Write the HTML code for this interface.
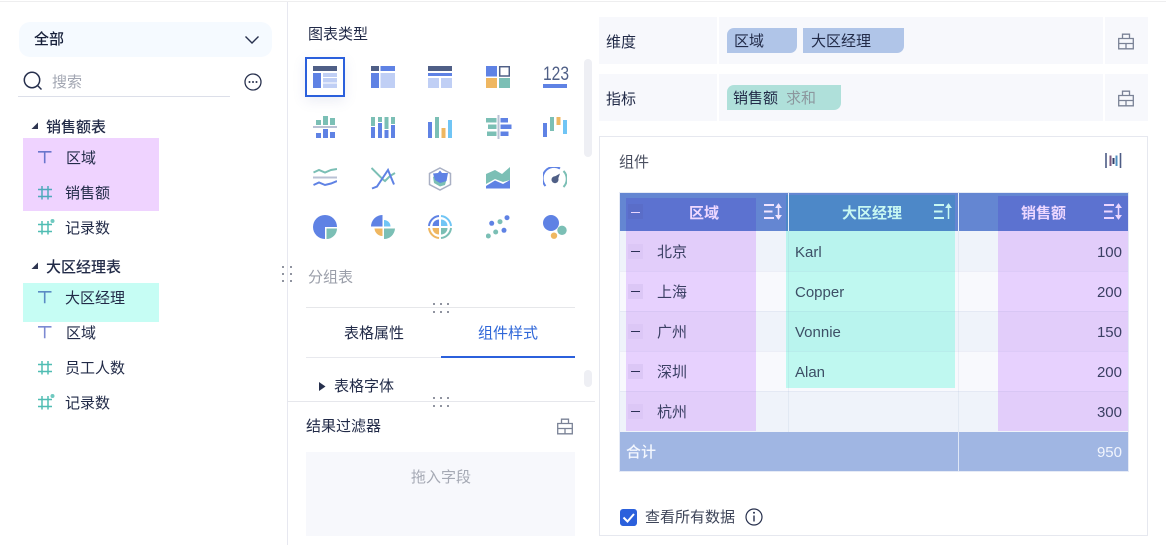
<!DOCTYPE html>
<html lang="zh"><head><meta charset="utf-8"><style>
html,body{margin:0;padding:0;background:#fff}
#p{position:relative;width:1166px;height:545px;overflow:hidden;background:#fff;font-family:"Liberation Sans","Noto Sans CJK SC",sans-serif;font-size:15px;color:#222b48}
#p div,#p svg{position:absolute}
.t{line-height:20px;white-space:nowrap;margin-top:2px}
.b{font-weight:500}
.d{width:2px;height:2px;background:#6d7282;border-radius:50%}
.m{width:15px;height:15px;background:#dcc7f6;left:628px}
.m:after{content:"";position:absolute;left:3px;top:7px;width:9px;height:1px;background:#2c3056}
</style></head><body><div id="p">
<div style="left:0;top:1px;width:1166px;height:1px;background:#eeeeef"></div>
<div style="left:287px;top:2px;width:1px;height:543px;background:#e7e8f0"></div>

<!-- left panel -->
<div style="left:19px;top:22px;width:253px;height:35px;background:#f5faff;border-radius:11px"></div>
<div class="t b" style="left:34px;top:28px;color:#17203a">全部</div>
<svg style="left:244px;top:35px" width="16" height="10"><path d="M1.5 1.5L8 8l6.500-6.500" fill="none" stroke="#27304d" stroke-width="1.400"/></svg>
<svg style="left:22px;top:70px" width="22" height="22"><circle cx="10" cy="10" r="7.700" fill="none" stroke="#27304d" stroke-width="1.500"/><path d="M15.500 15.500L19.500 19.500" stroke="#27304d" stroke-width="1.500"/></svg>
<div class="t" style="left:52px;top:71px;color:#a2a6b2">搜索</div>
<div style="left:18px;top:96px;width:212px;height:1px;background:#dcdfe9"></div>
<svg style="left:244px;top:73px" width="18" height="18"><circle cx="9" cy="9" r="8" fill="none" stroke="#27304d" stroke-width="1.300"/><circle cx="5.500" cy="9" r="1" fill="#27304d"/><circle cx="9" cy="9" r="1" fill="#27304d"/><circle cx="12.500" cy="9" r="1" fill="#27304d"/></svg>

<svg style="left:31px;top:122px" width="8" height="8"><path d="M7 0.500V7H0.500z" fill="#2e3550"/></svg>
<div class="t b" style="left:46px;top:116px">销售额表</div>
<div style="left:23px;top:138px;width:136px;height:73px;background:#efd3ff"></div>
<svg style="left:37px;top:150px" width="16" height="16"><path d="M1 1.800h13.500M7.700 1.800v11.500" fill="none" stroke="#6a76cc" stroke-width="1.600"/></svg>
<div class="t" style="left:66px;top:147px">区域</div>
<svg style="left:37px;top:185px" width="16" height="16"><path d="M1 4.500h14M1 11.500h14M5 1v13.500M11 1v13.500" fill="none" stroke="#4fa9bb" stroke-width="1.500"/></svg>
<div class="t" style="left:65px;top:182px">销售额</div>
<svg style="left:37px;top:218px" width="19" height="18"><path d="M1 6.500h14M1 13.500h14M5 3v13.500M11 3v13.500" fill="none" stroke="#50bdb3" stroke-width="1.500"/><circle cx="15.500" cy="3" r="2" fill="#6fc9c0"/></svg>
<div class="t" style="left:65px;top:217px">记录数</div>

<svg style="left:31px;top:262px" width="8" height="8"><path d="M7 0.500V7H0.500z" fill="#2e3550"/></svg>
<div class="t b" style="left:46px;top:256px">大区经理表</div>
<div style="left:23px;top:283px;width:136px;height:39px;background:#c6fdf4"></div>
<svg style="left:37px;top:290px" width="16" height="16"><path d="M1 1.800h13.500M7.700 1.800v11.500" fill="none" stroke="#5b8bc4" stroke-width="1.600"/></svg>
<div class="t" style="left:65px;top:287px">大区经理</div>
<svg style="left:37px;top:325px" width="16" height="16"><path d="M1 1.800h13.500M7.700 1.800v11.500" fill="none" stroke="#7c8ad2" stroke-width="1.600"/></svg>
<div class="t" style="left:66px;top:322px">区域</div>
<svg style="left:37px;top:360px" width="16" height="16"><path d="M1 4.500h14M1 11.500h14M5 1v13.500M11 1v13.500" fill="none" stroke="#50bdb3" stroke-width="1.500"/></svg>
<div class="t" style="left:65px;top:357px">员工人数</div>
<svg style="left:37px;top:393px" width="19" height="18"><path d="M1 6.500h14M1 13.500h14M5 3v13.500M11 3v13.500" fill="none" stroke="#50bdb3" stroke-width="1.500"/><circle cx="15.500" cy="3" r="2" fill="#6fc9c0"/></svg>
<div class="t" style="left:65px;top:392px">记录数</div>

<div class="d" style="left:282px;top:266px"></div><div class="d" style="left:282px;top:273px"></div><div class="d" style="left:282px;top:280px"></div>
<div class="d" style="left:290px;top:266px"></div><div class="d" style="left:290px;top:273px"></div><div class="d" style="left:290px;top:280px"></div>

<!-- middle panel -->
<div class="t" style="left:308px;top:23px">图表类型</div>
<div style="left:305px;top:57px;width:36px;height:36px;border:2px solid #2b60dc;box-shadow:0 4px 12px rgba(90,110,170,.12);background:#fff"></div>

<svg style="left:313px;top:66px" width="24" height="22"><rect width="24" height="5" fill="#4f5f86"/><rect y="7" width="8" height="15" fill="#5f82e4"/><rect x="10" y="7" width="14" height="4" fill="#c0cff5"/><rect x="10" y="12" width="14" height="4.500" fill="#c0cff5"/><rect x="10" y="17.500" width="14" height="4.500" fill="#c0cff5"/></svg>
<svg style="left:371px;top:66px" width="24" height="22"><rect width="8" height="5" fill="#4f5f86"/><rect x="9.500" width="14.500" height="5" fill="#5f82e4"/><rect y="7" width="8" height="15" fill="#5f82e4"/><rect x="9.500" y="7" width="14.500" height="15" fill="#c0cff5"/></svg>
<svg style="left:428px;top:66px" width="24" height="22"><rect width="24" height="5" fill="#4f5f86"/><rect y="7" width="24" height="3" fill="#5f82e4"/><rect y="12" width="11" height="10" fill="#c0cff5"/><rect x="13" y="12" width="11" height="10" fill="#c0cff5"/></svg>
<svg style="left:486px;top:66px" width="24" height="22"><rect width="11" height="10.500" fill="#5f82e4"/><rect x="13.700" y="0.700" width="9.600" height="9.300" fill="none" stroke="#4f5f86" stroke-width="1.500"/><rect y="12" width="11" height="10" fill="#efb761"/><rect x="13" y="12" width="11" height="10" fill="#7bbfb5"/></svg>
<div class="t" style="left:543px;top:63px;font-size:19px;transform:scaleX(.82);transform-origin:0 50%;color:#4f5f86">123</div>
<div style="left:543px;top:84px;width:24px;height:4px;background:#5f82e4"></div>

<svg style="left:313px;top:115px" width="24" height="24"><rect y="11" width="24" height="2" fill="#b9c1d4"/><g fill="#7bbfb5"><rect x="3" y="5" width="5" height="5"/><rect x="10" y="1" width="5" height="9"/><rect x="17" y="3" width="5" height="7"/></g><g fill="#5f82e4"><rect x="3" y="18" width="5" height="5"/><rect x="10" y="14" width="5" height="9"/><rect x="17" y="17" width="5" height="6"/></g></svg>
<svg style="left:371px;top:115px" width="24" height="24"><g fill="#7bbfb5"><rect y="2" width="4" height="9"/><rect x="7" y="2" width="4" height="5"/><rect x="13.500" y="2" width="4" height="12"/><rect x="20" y="2" width="4" height="7"/></g><g fill="#5f82e4"><rect y="12" width="4" height="11"/><rect x="7" y="8" width="4" height="15"/><rect x="13.500" y="15" width="4" height="8"/><rect x="20" y="10" width="4" height="13"/></g></svg>
<svg style="left:428px;top:115px" width="24" height="24"><rect y="7" width="4" height="16" fill="#5f82e4"/><rect x="7" y="2" width="4" height="21" fill="#7bbfb5"/><rect x="13.500" y="13" width="4" height="10" fill="#efb761"/><rect x="20" y="5" width="4" height="18" fill="#70c5f5"/></svg>
<svg style="left:486px;top:115px" width="26" height="24"><rect x="11.500" width="2" height="24" fill="#b9c1d4"/><g fill="#7bbfb5"><rect y="3" width="10.500" height="4.500"/><rect x="2" y="9.500" width="8.500" height="4.500"/><rect x="1" y="16.500" width="9.500" height="4.500"/></g><g fill="#5f82e4"><rect x="14.500" y="3" width="7.500" height="4.500"/><rect x="14.500" y="9.500" width="11" height="4.500"/><rect x="14.500" y="16.500" width="8" height="4.500"/></g></svg>
<svg style="left:543px;top:115px" width="24" height="24"><rect y="8" width="4" height="14" fill="#5f82e4"/><rect x="7" y="2" width="4" height="14" fill="#7bbfb5"/><rect x="13.500" y="2" width="4" height="8" fill="#efb761"/><rect x="20" y="5" width="4" height="14" fill="#70c5f5"/></svg>

<svg style="left:313px;top:167px" width="24" height="24"><path d="M0.500 5.500L6 3L12 5.500L18 3L24 2" fill="none" stroke="#7bbfb5" stroke-width="2"/><rect y="9.500" width="24" height="2" fill="#b9c1d4"/><path d="M0.500 18L6 15.500L12 18L18 16.500L24 14" fill="none" stroke="#5f82e4" stroke-width="2"/></svg>
<svg style="left:371px;top:167px" width="25" height="24"><path d="M0.500 1L12 12.500L14 14L19 9L24 6" fill="none" stroke="#7bbfb5" stroke-width="2"/><path d="M1 21.500L6 19.500L17 3L23 17.500" fill="none" stroke="#5f82e4" stroke-width="2"/></svg>
<svg style="left:428px;top:167px" width="24" height="24"><path d="M12 1L22.500 6.500V17.500L12 23L1.500 17.500V6.500Z" fill="none" stroke="#a9b0c4" stroke-width="1.500"/><path d="M5 10L12 5L19 11L17 18L12 19.500L6 16Z" fill="#7bbfb5"/><path d="M5 6.500L10 6L12 3.500L14 6L20 6L18.500 14L12 16L7 13Z" fill="#5f82e4"/></svg>
<svg style="left:486px;top:167px" width="24" height="22"><path d="M0 7L9 3L16 7L24 0V13L17 15L9 12L0 17Z" fill="#7bbfb5"/><path d="M0 19L9 13.500L17 17L24 13V21.500H0Z" fill="#5f82e4"/></svg>
<svg style="left:543px;top:167px" width="24" height="24"><path d="M2.500 19A11.500 11.500 0 0 1 17 1.500" fill="none" stroke="#5f82e4" stroke-width="2"/><path d="M20.500 4A11.500 11.500 0 0 1 20.500 20" fill="none" stroke="#7bbfb5" stroke-width="2"/><circle cx="12" cy="12.700" r="3.500" fill="#4f5f86"/><path d="M10 10.500L17 6.500L14 15Z" fill="#4f5f86"/></svg>

<svg style="left:313px;top:215px" width="24" height="24"><circle cx="12" cy="12" r="12" fill="#5f82e4"/><path d="M12 12h12v12h-12Z" fill="#fff"/><path d="M13.500 13.500H24A10.500 10.500 0 0 1 13.500 24Z" fill="#7bbfb5"/></svg>
<svg style="left:371px;top:215px" width="24" height="24"><path d="M11.500 0A11.500 11.500 0 0 0 0 11.500H11.500Z" fill="#5f82e4"/><path d="M13 5A6.500 6.500 0 0 1 19.500 11.500H13Z" fill="#70c5f5"/><path d="M3.500 13.500H11.500V21A8 8 0 0 1 3.500 13.500Z" fill="#efb761"/><path d="M13 13.500H24A11 11 0 0 1 13 24Z" fill="#7bbfb5"/></svg>
<svg style="left:428px;top:215px" width="24" height="24"><g fill="none" stroke-width="2"><path d="M1 11A11 11 0 0 1 11 1" stroke="#5f82e4"/><path d="M13 1A11 11 0 0 1 23 11" stroke="#70c5f5"/><path d="M1 13A11 11 0 0 0 11 23" stroke="#efb761"/><path d="M13 23A11 11 0 0 0 23 13" stroke="#7bbfb5"/></g><path d="M11 4.500A6.500 6.500 0 0 0 4.500 11H11Z" fill="#5f82e4"/><path d="M13 4.500A6.500 6.500 0 0 1 19.500 11H13Z" fill="#70c5f5"/><path d="M11 19.500A6.500 6.500 0 0 1 4.500 13H11Z" fill="#efb761"/><path d="M13 19.500A6.500 6.500 0 0 0 19.500 13H13Z" fill="#7bbfb5"/></svg>
<svg style="left:486px;top:215px" width="24" height="24"><g fill="#5f82e4"><circle cx="5.700" cy="8.300" r="2.500"/><circle cx="21" cy="2.700" r="2.500"/><circle cx="18" cy="15.300" r="2.500"/></g><g fill="#7bbfb5"><circle cx="14" cy="6.700" r="2.500"/><circle cx="9.700" cy="17" r="2.500"/><circle cx="2.300" cy="21" r="2.500"/></g></svg>
<svg style="left:543px;top:215px" width="24" height="24"><circle cx="8" cy="8" r="8" fill="#5f82e4"/><circle cx="19" cy="15.300" r="4.700" fill="#7bbfb5"/><circle cx="11" cy="20.700" r="3.200" fill="#efb761"/></svg>

<div style="left:584px;top:59px;width:8px;height:98px;background:#eeeff4;border-radius:4px"></div>
<div style="left:584px;top:370px;width:8px;height:17px;background:#eeeff4;border-radius:4px"></div>

<div class="t" style="left:308px;top:266px;color:#9a9ea9">分组表</div>
<div style="left:306px;top:307px;width:269px;height:1px;background:#e6e7ea"></div>
<div class="d" style="left:433px;top:303px"></div><div class="d" style="left:440px;top:303px"></div><div class="d" style="left:447px;top:303px"></div>
<div class="d" style="left:433px;top:311px"></div><div class="d" style="left:440px;top:311px"></div><div class="d" style="left:447px;top:311px"></div>
<div class="t" style="left:344px;top:322px">表格属性</div>
<div class="t" style="left:478px;top:322px;color:#2e66d8">组件样式</div>
<div style="left:306px;top:357px;width:135px;height:1px;background:#e8e9ee"></div>
<div style="left:441px;top:356px;width:134px;height:2px;background:#2b60dc"></div>
<svg style="left:318px;top:381px" width="9" height="11"><path d="M1 1L7.500 5.500L1 10Z" fill="#27304d"/></svg>
<div class="t" style="left:334px;top:375px">表格字体</div>
<div style="left:287px;top:401px;width:308px;height:1px;background:#e6e7ec"></div>
<div class="d" style="left:433px;top:397px"></div><div class="d" style="left:440px;top:397px"></div><div class="d" style="left:447px;top:397px"></div>
<div class="d" style="left:433px;top:405px"></div><div class="d" style="left:440px;top:405px"></div><div class="d" style="left:447px;top:405px"></div>
<div class="t" style="left:306px;top:415px">结果过滤器</div>
<svg style="left:557px;top:418px" width="16" height="17"><path d="M.7 5.500H15.300V15.800H.7ZM.7 10.500H15.300M8 10.500V15.800M4.500 5.500V1.200H11.500V5.500" fill="none" stroke="#7a8296" stroke-width="1.300"/></svg>
<div style="left:306px;top:452px;width:269px;height:84px;background:#f7f8fc"></div>
<div class="t" style="left:411px;top:466px;color:#a5a9b4">拖入字段</div>

<!-- right panel rows -->
<div style="left:599px;top:17px;width:549px;height:47px;background:#f7f8fc"></div>
<div style="left:599px;top:74px;width:549px;height:47px;background:#f7f8fc"></div>
<div style="left:717px;top:17px;width:2px;height:104px;background:#fff"></div>
<div style="left:1103px;top:17px;width:2px;height:104px;background:#fff"></div>
<div style="left:599px;top:64px;width:549px;height:10px;background:#fff"></div>
<div class="t" style="left:606px;top:31px">维度</div>
<div class="t" style="left:606px;top:88px">指标</div>
<div style="left:727px;top:28px;width:70px;height:25px;background:#b0c5e8;border-radius:7px 0 7px 0"></div>
<div class="t" style="left:734px;top:30px">区域</div>
<div style="left:803px;top:28px;width:101px;height:25px;background:#b0c5e8;border-radius:0 0 7px 0"></div>
<div class="t" style="left:811px;top:30px">大区经理</div>
<div style="left:727px;top:85px;width:114px;height:25px;background:#afe0da;border-radius:7px 0 7px 0"></div>
<div class="t" style="left:733px;top:87px">销售额</div>
<div class="t" style="left:786px;top:87px;color:#8c979e">求和</div>
<svg style="left:1118px;top:33px" width="16" height="17"><path d="M.7 5.500H15.300V15.800H.7ZM.7 10.500H15.300M8 10.500V15.800M4.500 5.500V1.200H11.500V5.500" fill="none" stroke="#7a8296" stroke-width="1.300"/></svg>
<svg style="left:1118px;top:90px" width="16" height="17"><path d="M.7 5.500H15.300V15.800H.7ZM.7 10.500H15.300M8 10.500V15.800M4.500 5.500V1.200H11.500V5.500" fill="none" stroke="#7a8296" stroke-width="1.300"/></svg>

<!-- card -->
<div style="left:599px;top:136px;width:547px;height:398px;border:1px solid #e6e8ef"></div>
<div class="t" style="left:619px;top:151px;color:#4a4f60">组件</div>
<svg style="left:1105px;top:152px" width="17" height="17"><path d="M1 1V16M15.500 1V16" stroke="#4d5c85" stroke-width="1.600"/><path d="M5.500 3.500V14" stroke="#7a5a80" stroke-width="2"/><path d="M8.500 6V12" stroke="#333f6a" stroke-width="2"/><path d="M11.500 3.500V14" stroke="#4f8fc0" stroke-width="2"/></svg>

<!-- table -->
<div style="left:619px;top:192px;width:510px;height:280px;background:#e6ebf6"></div>
<div style="left:620px;top:193px;width:508px;height:38px;background:#6486d2"></div>
<div style="left:620px;top:231px;width:508px;height:40px;background:#eff3fa"></div>
<div style="left:620px;top:271px;width:508px;height:40px;background:#f8f9fd"></div>
<div style="left:620px;top:311px;width:508px;height:40px;background:#eff3fa"></div>
<div style="left:620px;top:351px;width:508px;height:40px;background:#f8f9fd"></div>
<div style="left:620px;top:391px;width:508px;height:41px;background:#eff3fa"></div>
<div style="left:620px;top:432px;width:508px;height:39px;background:#a0b6e3"></div>

<!-- purple left col -->
<div style="left:626px;top:198px;width:130px;height:33px;background:#5c72d0"></div>
<div style="left:626px;top:231px;width:130px;height:40px;background:#e2cdfa"></div>
<div style="left:626px;top:271px;width:130px;height:40px;background:#e7d1fe"></div>
<div style="left:626px;top:311px;width:130px;height:40px;background:#e2cdfa"></div>
<div style="left:626px;top:351px;width:130px;height:40px;background:#e7d1fe"></div>
<div style="left:626px;top:391px;width:130px;height:40px;background:#e2cdfa"></div>
<!-- teal col -->
<div style="left:786px;top:195px;width:169px;height:36px;background:#4d88c8"></div>
<div style="left:786px;top:231px;width:169px;height:40px;background:#b9f4ee"></div>
<div style="left:786px;top:271px;width:169px;height:40px;background:#bff8f0"></div>
<div style="left:786px;top:311px;width:169px;height:40px;background:#b9f4ee"></div>
<div style="left:786px;top:351px;width:169px;height:37px;background:#bff8f0"></div>
<!-- purple right col -->
<div style="left:998px;top:196px;width:130px;height:35px;background:#5c72d0"></div>
<div style="left:998px;top:231px;width:130px;height:40px;background:#e2cdfa"></div>
<div style="left:998px;top:271px;width:130px;height:40px;background:#e7d1fe"></div>
<div style="left:998px;top:311px;width:130px;height:40px;background:#e2cdfa"></div>
<div style="left:998px;top:351px;width:130px;height:40px;background:#e7d1fe"></div>
<div style="left:998px;top:391px;width:130px;height:40px;background:#e2cdfa"></div>
<!-- grid lines -->
<div style="left:620px;top:271px;width:508px;height:1px;background:rgba(120,130,190,.09)"></div>
<div style="left:620px;top:311px;width:508px;height:1px;background:rgba(120,130,190,.09)"></div>
<div style="left:620px;top:351px;width:508px;height:1px;background:rgba(120,130,190,.09)"></div>
<div style="left:620px;top:391px;width:508px;height:1px;background:rgba(120,130,190,.09)"></div>
<div style="left:788px;top:231px;width:1px;height:201px;background:rgba(120,150,190,.1)"></div>
<div style="left:958px;top:231px;width:1px;height:201px;background:rgba(120,150,190,.1)"></div>
<div style="left:788px;top:193px;width:1px;height:38px;background:#e8f0fb"></div>
<div style="left:958px;top:193px;width:1px;height:38px;background:#e8f0fb"></div>
<div style="left:958px;top:432px;width:1px;height:39px;background:#dfe7f6"></div>

<!-- header content -->
<div style="left:628px;top:204px;width:15px;height:15px;background:#5a6dc8"></div>
<div style="left:631px;top:212px;width:9px;height:1px;background:#e9d6ff"></div>
<div class="t" style="left:689px;top:202px;font-weight:700;color:#efd8ff">区域</div>
<div class="t" style="left:842px;top:202px;font-weight:700;color:#c8f8f2">大区经理</div>
<div class="t" style="left:1021px;top:202px;font-weight:700;color:#ecd6ff">销售额</div>
<svg style="left:763px;top:203px" width="19" height="17"><path d="M1 2H11M1 8.500H9.500M1 15H11" stroke="#f0e4ff" stroke-width="2"/><path d="M15.500 1V16" stroke="#f0e4ff" stroke-width="1.500"/><path d="M13 4.500L15.500 1L18 4.500ZM13 12.500L15.500 16L18 12.500Z" fill="#f0e4ff" stroke="#f0e4ff"/></svg>
<svg style="left:933px;top:203px" width="19" height="17"><path d="M1 2H11M1 8.500H9.500M1 15H11" stroke="#c8f8f2" stroke-width="2"/><path d="M15.500 1V16" stroke="#c8f8f2" stroke-width="1.500"/><path d="M13 4.500L15.500 1L18 4.500Z" fill="#c8f8f2" stroke="#c8f8f2"/></svg>
<svg style="left:1103px;top:203px" width="19" height="17"><path d="M1 2H11M1 8.500H9.500M1 15H11" stroke="#ecd6ff" stroke-width="2"/><path d="M15.500 1V16" stroke="#ecd6ff" stroke-width="1.500"/><path d="M13 4.500L15.500 1L18 4.500ZM13 12.500L15.500 16L18 12.500Z" fill="#ecd6ff" stroke="#ecd6ff"/></svg>

<!-- body content -->
<div class="m" style="top:244px"></div><div class="m" style="top:284px"></div><div class="m" style="top:324px"></div><div class="m" style="top:364px"></div><div class="m" style="top:404px"></div>
<div class="t" style="left:657px;top:241px;color:#3a3f63">北京</div>
<div class="t" style="left:657px;top:281px;color:#3a3f63">上海</div>
<div class="t" style="left:657px;top:321px;color:#3a3f63">广州</div>
<div class="t" style="left:657px;top:361px;color:#3a3f63">深圳</div>
<div class="t" style="left:657px;top:401px;color:#3a3f63">杭州</div>
<div class="t" style="left:795px;top:241px;color:#3d4f66">Karl</div>
<div class="t" style="left:795px;top:281px;color:#3d4f66">Copper</div>
<div class="t" style="left:795px;top:321px;color:#3d4f66">Vonnie</div>
<div class="t" style="left:795px;top:361px;color:#3d4f66">Alan</div>
<div class="t" style="right:44px;top:241px;color:#3a3f63">100</div>
<div class="t" style="right:44px;top:281px;color:#3a3f63">200</div>
<div class="t" style="right:44px;top:321px;color:#3a3f63">150</div>
<div class="t" style="right:44px;top:361px;color:#3a3f63">200</div>
<div class="t" style="right:44px;top:401px;color:#3a3f63">300</div>
<div class="t" style="left:626px;top:441px;font-weight:500;color:#f4f7fe">合计</div>
<div class="t" style="right:44px;top:441px;color:#f2f5fd">950</div>

<!-- footer -->
<div style="left:620px;top:509px;width:17px;height:17px;background:#2b60dc;border-radius:3px"></div>
<svg style="left:620px;top:509px" width="17" height="17"><path d="M3.500 8.500L7.500 12.500L14 5" fill="none" stroke="#fff" stroke-width="2"/></svg>
<div class="t" style="left:645px;top:506px;color:#3d4458">查看所有数据</div>
<svg style="left:745px;top:508px" width="18" height="18"><circle cx="9" cy="9" r="8" fill="none" stroke="#27304d" stroke-width="1.200"/><path d="M9 7.500V13.500" stroke="#27304d" stroke-width="1.400"/><circle cx="9" cy="4.800" r="1" fill="#27304d"/></svg>
</div></body></html>
